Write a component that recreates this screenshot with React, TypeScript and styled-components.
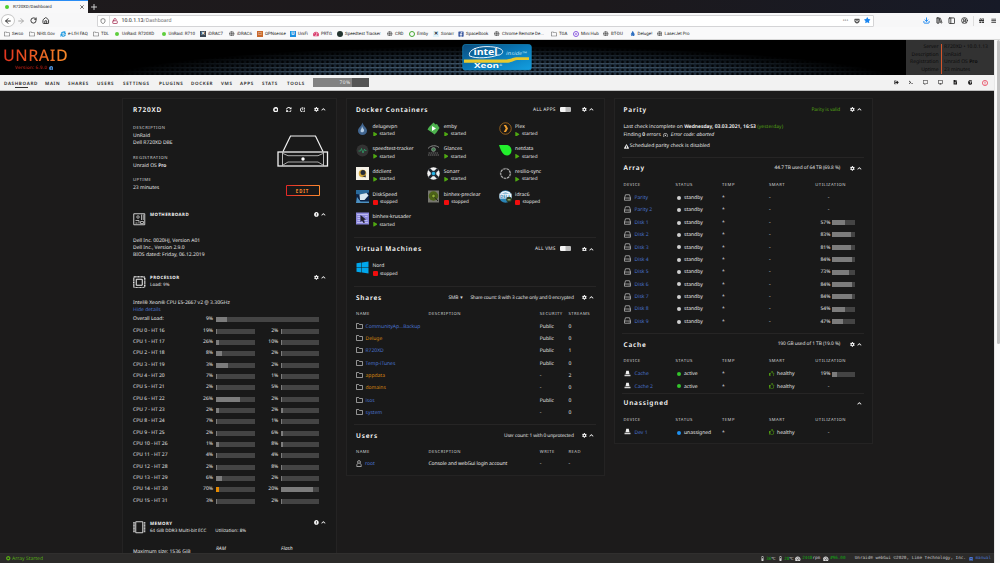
import React from 'react';
import styled, { createGlobalStyle } from 'styled-components';
import {
  FaCog, FaChevronUp, FaSyncAlt, FaPowerOff, FaInfoCircle, FaStopCircle, FaRegThumbsUp, FaExclamationTriangle,
  FaRegTimesCircle, FaSignOutAlt, FaTerminal, FaDesktop, FaQuestionCircle, FaGlobe, FaRegFolder, FaStar, FaBars, FaGift,
  FaFacebookSquare, FaBook, FaThermometerHalf, FaTachometerAlt, FaRegCommentAlt, FaFileAlt, FaTint, FaGetPocket,
  FaInternetExplorer, FaPlay,
} from 'react-icons/fa';
import { ArrowLeft, ArrowRight, RotateCw, House, Download, LibraryBig, PanelLeft, CircleUserRound, Shield, LockOpen } from 'lucide-react';

const Global = createGlobalStyle`
  * { box-sizing: border-box; }
  html, body { margin: 0; background: #1c1b1b; overflow: hidden; }
  body { font-family: "Noto Sans", sans-serif; font-size: 5px; line-height: 1; color: #e8e8e8; text-rendering: geometricPrecision; }
  svg { display: block; flex: none; }
`;

const Screen = styled.div`width: 1000px; height: 563px; display: flex; flex-direction: column; overflow: hidden; white-space: nowrap;`;

/* ---------- browser chrome ---------- */
const TabStrip = styled.div`height: 13px; flex: none; display: flex; background: linear-gradient(90deg, #1e1a1c, #1c191c 60%, #171a27);`;
const Tab = styled.div`
  width: 88px; height: 13px; padding: 0 4px 0 5px; display: flex; align-items: center; gap: 3px;
  background: #f8f8f9; border-top: 1px solid #2a8df5; color: #222; font: 4.4px Roboto, sans-serif;
`;
const TabTitle = styled.span`flex: 1; padding-left: 1px;`;
const Dot = styled.i<{ $c: string; $s?: number }>`
  width: ${p => p.$s ?? 4}px; height: ${p => p.$s ?? 4}px; border-radius: 50%; background: ${p => p.$c}; flex: none;
`;
const NewTab = styled.div`display: flex; align-items: center; padding-left: 3px;`;
const NavBar = styled.div`height: 14px; flex: none; display: flex; align-items: center; background: #f7f7f8; color: #333; padding-top: 1px;`;
const NavIcons = styled.div`width: 97px; display: flex; align-items: center; padding-left: 1px;`;
const BackBtn = styled.div`width: 14px; height: 13px; border: 1px solid #c8c8c8; border-radius: 50%; background: #fff; display: grid; place-items: center;`;
const Slot = styled.div<{ $w: number; $c?: string }>`width: ${p => p.$w}px; display: flex; justify-content: center; color: ${p => p.$c ?? 'inherit'};`;
const UrlBar = styled.div`
  width: 777px; height: 12px; background: #fff; border: 1px solid #d4d4d6; border-radius: 1px; display: flex; align-items: center;
  padding: 0 0 0 2px; font: 5.3px Roboto, sans-serif; color: #777;
  b { font-weight: 400; color: #111; }
`;
const UrlText = styled.span`flex: 1; padding: 1px 0 0 3.500px;`;
const UrlSep = styled.i`width: 1px; height: 10px; background: #ddd; margin: 0 2px 0 3px;`;
const Bookmarks = styled.div`height: 13px; flex: none; display: flex; background: #f9f9fa; padding-left: 4px; color: #222; font: 4.45px Roboto, sans-serif; border-bottom: 1px solid #d8d8d8;`;
const Bookmark = styled.div<{ $w: number }>`width: ${p => p.$w}px; display: flex; align-items: center; gap: 2px; padding-top: 1px;`;
const BmText = styled.span`padding-top: 1.4px;`;
const BmIcon = styled.span<{ $c?: string }>`width: 6px; display: flex; justify-content: center; color: ${p => p.$c ?? '#666'}; flex: none;`;
const Square = styled.span<{ $bg: string; $c?: string }>`
  width: 6px; height: 6px; background: ${p => p.$bg}; color: ${p => p.$c ?? '#fff'}; font-size: 5px; font-weight: 700; display: grid; place-items: center;
`;
const Ring = styled.span<{ $c: string }>`width: 6px; height: 6px; border-radius: 50%; border: 1px solid ${p => p.$c}; display: grid; place-items: center;`;

/* ---------- page frame ---------- */
const Viewport = styled.div`flex: 1; min-height: 0; display: flex;`;
const Page = styled.div`width: 994px; display: flex; flex-direction: column; background: #1c1b1b;`;
const ScrollTrack = styled.div`width: 6px; background: #fafafa; border-left: 1px solid #e8e8e8; padding: 0 1px;`;
const ScrollThumb = styled.div`height: 304px; width: 3px; margin-left: 1px; border-radius: 2px; background: #c2c2c2;`;

const Banner = styled.div`height: 35px; flex: none; background: #000; position: relative; display: flex; overflow: hidden;`;
const MeshArt = styled.div`position: absolute; inset: 0;`;
const Brand = styled.div`position: relative; width: 462px; padding-left: 3px;`;
const Logo = styled.div`
  width: 66px; height: 15px; margin-top: 7.5px; font: 16px/15px "Noto Sans", sans-serif; font-weight: 500; letter-spacing: .5px;
  background: linear-gradient(90deg, #e2331f, #f58a28); -webkit-background-clip: text; color: transparent;
`;
const Version = styled.div`
  margin: 3.2px 0 0 12px; display: flex; align-items: center; gap: 1.5px; color: #d3281f; font-size: 4.6px; letter-spacing: .22px;
  svg { color: #4b8fd9; }
`;
const BadgeArt = styled.div`position: relative; margin-top: 4px; flex: 1;`;
const ServerInfo = styled.div`
  position: relative; width: 88px; height: 35px; background: #323232; color: #0c0c0c; display: grid; grid-template-columns: 32.5px 1.5px 1fr; column-gap: 2px;
  padding-top: 3.500px; font-size: 5px; line-height: 7.5px;
`;
const InfoCol = styled.div<{ $right?: boolean }>`text-align: ${p => (p.$right ? 'right' : 'left')}; padding-top: .500px;`;
const InfoBar = styled.i`width: 1.5px; height: 30px; background: #d4552b;`;

const Menu = styled.nav`
  height: 16px; flex: none; background: #f2f2f2; border-bottom: 1px solid #bdbdbd; display: flex; align-items: center; padding-left: 4px;
  color: #1c1b1b; font-weight: 600; font-size: 4.55px; letter-spacing: .66px;
`;
const MenuItem = styled.span<{ $w: number; $active?: boolean }>`
  width: ${p => p.$w}px; height: 12px; line-height: 12px; margin-top: 2px;
  background: ${p => (p.$active ? 'linear-gradient(#333,#333) 11px 9px / 13px 1px no-repeat' : 'none')};
`;
const Gauge = styled.div`
  width: 56px; height: 9px; background: linear-gradient(90deg, #828282 70%, #545454 70%); color: #eee; font-size: 4.9px; font-weight: 400; line-height: 10.5px;
  padding-left: 26.5px; letter-spacing: .4px;
`;
const MenuIcons = styled.div`margin: 1.5px 0 0 520px; display: flex;`;

const Columns = styled.main`flex: 1; min-height: 0; display: flex; align-items: flex-start; padding: 7px 0 0 122px; gap: 9px; overflow: hidden;`;
const Panel = styled.section<{ $w: number; $h: number; $pl: number }>`
  width: ${p => p.$w}px; height: ${p => p.$h}px; background: #191919; border: 1px solid #242323; padding: 4px 8px 0 ${p => p.$pl - 1}px; flex: none;
`;

/* ---------- shared parts ---------- */
const Row = styled.div<{ $h: number; $mt?: number }>`height: ${p => p.$h}px; margin-top: ${p => p.$mt ?? 0}px; display: flex; align-items: center;`;
const Grow = styled.span`flex: 1;`;
const Title = styled.h2`margin: 0; flex: 1; font-size: 6.5px; font-weight: 600; letter-spacing: .8px; color: #fff;`;
const Note = styled.span<{ $c?: string; $mr?: number; $ls?: number }>`
  font-size: 4.8px; color: ${p => p.$c ?? '#e0e0e0'}; margin-right: ${p => p.$mr ?? 9.500}px; letter-spacing: ${p => p.$ls ?? -.05}px;
`;
const Controls = styled.span<{ $r: number }>`display: flex; align-items: center; gap: 2.2px; color: #f6f6f6; margin: -1px ${p => p.$r}px 0 0;`;
const Rule = styled.hr`border: 0; height: 1px; margin: 0 0 0 -2px; background: #262525;`;
const Cap = styled.div<{ $h?: number }>`font-size: 4.2px; letter-spacing: .48px; color: #d2d2d2; height: ${p => p.$h ?? 7}px; line-height: ${p => p.$h ?? 7}px;`;
const Line = styled.div<{ $h?: number; $c?: string }>`
  height: ${p => p.$h ?? 7.33}px; padding-top: 1.5px; line-height: 1; color: ${p => p.$c ?? '#e8e8e8'}; display: flex; align-items: center;
  b { font-weight: 600; color: #fff; }
`;
const Toggle = styled.span`width: 11px; height: 5px; border-radius: 1px; background: linear-gradient(90deg, #f4f4f4 48%, #bbb 52%); margin: -1.5px 11.5px 0 0;`;
const Meter = styled.span<{ $w: number }>`width: ${p => p.$w}px; height: 5px; background: #444; display: flex; flex: none;`;
const MeterFill = styled.i<{ $c?: string }>`height: 100%; background: ${p => p.$c ?? '#7c7c7c'};`;

const Bar = ({ w, v, c }: { w: number; v: number; c?: string }) => (
  <Meter $w={w}><MeterFill $c={c} style={{ width: `${v}%` }} /></Meter>
);
const Ctl = ({ icon = 'gear', r = 2.5 }: { icon?: 'gear' | 'info' | 'none'; r?: number }) => (
  <Controls $r={r}>
    {icon === 'gear' && <FaCog size={4.8} />}
    {icon === 'info' && <FaInfoCircle size={4.8} />}
    <FaChevronUp size={4.8} />
  </Controls>
);

/* ---------- system panel ---------- */
const SysIcons = styled.span`display: flex; gap: 7.8px; margin: -1px 8.500px 0 0; color: #f6f6f6;`;
const SysTop = styled.div`display: flex; justify-content: space-between; padding-top: 7px; height: 94px;`;
const SysText = styled.div`display: flex; flex-direction: column;`;
const Gap = styled.div<{ $h: number }>`height: ${p => p.$h}px; flex: none;`;
const SysArt = styled.div`width: 52px; margin-right: -.500px; padding-top: 10px; display: flex; flex-direction: column; align-items: center; gap: 17.5px;`;
const EditBtn = styled.button`
  width: 34px; height: 11px; padding: 1px 0 0; border: 1px solid transparent; border-radius: 1px; font: 700 4.3px "Noto Sans", sans-serif; letter-spacing: .9px; color: #ff8c2f;
  background: linear-gradient(#191919, #191919) padding-box, linear-gradient(90deg, #e22828, #ff8c2f) border-box;
`;
const HwHead = styled.div`display: flex; align-items: flex-start; gap: 4.5px; height: 14px;`;
const HwText = styled.div`flex: 1; height: 14px; font-size: 4.5px; line-height: 7.3px; letter-spacing: .05px; margin-top: -.700px;`;
const HwName = styled.div`font-weight: 700; font-size: 4.4px; letter-spacing: .45px; color: #f2f2f2;`;
const HwSub = styled.div`display: flex; gap: 9px;`;
const CpuRow = styled.div`height: 11.33px; padding-top: 1.4px; display: grid; grid-template-columns: 80px 2.5px 39px 23.7px 2.5px 38.3px; align-items: center;`;
const Pct = styled.span`text-align: right;`;
const CpuLabel = styled.span`display: flex; justify-content: space-between;`;
const Wide = styled.span`grid-column: span 4;`;
const MemRow = styled.div`display: grid; grid-template-columns: 83px 65px 1fr; height: 10px; line-height: 10px; i { margin-top: -2.500px; } span { padding-top: .500px; }`;

const cpus: [number, number, number, number][] = [
  [19, 5, 2, 2], [26, 8, 10, 2], [8, 17, 2, 1], [3, 33, 2, 4], [7, 4, 1, 1], [2, 1, 5, 3], [26, 63, 2, 1], [2, 10, 2, 7],
  [7, 4, 1, 1], [2, 1, 6, 5], [1, 8, 8, 5], [4, 5, 4, 3], [2, 1, 8, 1], [6, 17, 2, 1], [70, 8, 20, 84], [3, 2, 2, 3],
];

const ServerArt = () => (
  <svg width="52" height="32" viewBox="0 0 52 32" fill="none" stroke="#f2f2f2">
    <path d="M6 16.500 13.500 1h25L46 16.500" strokeWidth="1.200" />
    <rect x="1" y="17" width="49.500" height="14" strokeWidth="1.300" />
    <path d="M5.500 17v14M46.500 17v14" strokeWidth=".9" stroke="#ccc" />
    <path d="M6 18.500l5 2.200h30l5-2.200M6 30l5-3h30l5 3" strokeWidth="1" stroke="#aaa" />
    <circle cx="26" cy="24" r="1.700" fill="#fff" stroke="none" />
  </svg>
);
const BoardArt = () => (
  <svg width="12.500" height="12.500" viewBox="0 0 25 25" fill="none" stroke="#bbb" strokeWidth="1.800">
    <path d="M1.500 1.500h22v22h-22z" stroke="#ddd" /><circle cx="10" cy="8" r="2.500" /><path d="M17 3v11M20.500 3v11M5 15h7v6M5 20h4M15 17h6v4h-6z" />
  </svg>
);
const ChipArt = () => (
  <svg width="12.500" height="12.500" viewBox="0 0 25 25" fill="none" stroke="#f2f2f2">
    <path d="M6.500 6.500h12v12h-12z" strokeWidth="2" /><rect x="1.500" y="1.500" width="22" height="22" rx="3" strokeWidth="3" strokeDasharray="2 .8" stroke="#ddd" />
  </svg>
);
const MemArt = () => (
  <svg width="12.500" height="12.500" viewBox="0 0 25 25" fill="none" stroke="#e6e6e6">
    <path d="M5.500 1.500h14v22h-14z" strokeWidth="1.800" /><path d="M2 2v21M23 2v21" strokeWidth="3.400" strokeDasharray="2.400 .6" stroke="#bbb" />
  </svg>
);

const SystemPanel = () => (
  <Panel $w={215} $h={470} $pl={11}>
    <Row $h={16} $mt={-1}>
      <Title>R720XD</Title>
      <SysIcons><FaStopCircle size={5.6} /><FaSyncAlt size={5.6} /><FaPowerOff size={5.6} /></SysIcons>
      <Ctl />
    </Row>
    <SysTop>
      <SysText>
        <Cap $h={7}>DESCRIPTION</Cap><Line $h={7.3}>UnRaid</Line><Line $h={7.3}>Dell R720XD DBE</Line>
        <Gap $h={8} />
        <Cap>REGISTRATION</Cap><Line>Unraid OS&nbsp;<b>Pro</b></Line>
        <Gap $h={8.3} />
        <Cap>UPTIME</Cap><Line>23 minutes</Line>
      </SysText>
      <SysArt><ServerArt /><EditBtn>EDIT</EditBtn></SysArt>
    </SysTop>
    <Gap $h={1} />
    <HwHead><BoardArt /><HwText><HwName>MOTHERBOARD</HwName></HwText><Ctl icon="info" /></HwHead>
    <Gap $h={9.6} />
    <Line>Dell Inc. 0020HJ, Version A01</Line><Line>Dell Inc., Version 2.9.0</Line><Line>BIOS dated: Friday, 06.12.2019</Line>
    <Gap $h={17.2} />
    <HwHead><ChipArt /><HwText><HwName>PROCESSOR</HwName>Load: 9%</HwText><Ctl /></HwHead>
    <Gap $h={9.1} />
    <Line>Intel® Xeon® CPU E5-2667 v2 @ 3.30GHz</Line><Line $c="#4a74d0">Hide details</Line>
    <CpuRow>
      <CpuLabel>Overall Load:<span>9%</span></CpuLabel><span /><Wide><Bar w={103.5} v={11} /></Wide>
    </CpuRow>
    {cpus.map(([a, fa, b, fb], i) => (
      <CpuRow key={i}>
        <CpuLabel>{`CPU ${i} - HT ${i + 16}`}<span>{a}%</span></CpuLabel><span />
        <Bar w={39} v={fa} c={a === 70 ? '#e68a00' : undefined} />
        <Pct>{b}%</Pct><span /><Bar w={38.3} v={fb} />
      </CpuRow>
    ))}
    <Gap $h={15.2} />
    <HwHead>
      <MemArt />
      <HwText><HwName>MEMORY</HwName><HwSub><span>64 GiB DDR3 Multi-bit ECC</span><span>Utilization: 8%</span></HwSub></HwText>
      <Ctl icon="info" />
    </HwHead>
    <Gap $h={11} />
    <MemRow><span>Maximum size: 1536 GiB</span><i>RAM</i><i>Flash</i></MemRow>
  </Panel>
);

/* ---------- docker / shares panel ---------- */
const AppGrid = styled.div`display: grid; grid-template-columns: repeat(3, 71.3px); grid-auto-rows: 22.67px;`;
const AppCell = styled.div`display: flex; align-items: center; gap: 3.5px; height: 22.67px;`;
const AppText = styled.div`line-height: 7.4px; padding-top: 5.6px;`;
const AppState = styled.div`display: flex; align-items: center; gap: 2.4px; font-size: 4.6px; > svg, > i { margin-top: -1.6px; }`;
const StopMark = styled.i`width: 5px; height: 5px; border-radius: 1px; background: #f10d0d;`;
const AppArt = styled.span`width: 13px; height: 13px;`;
const ShareRow = styled.div<{ $h?: number }>`
  height: ${p => p.$h ?? 12.38}px; padding-top: ${p => (p.$h ? 0 : 1.4)}px; display: grid; grid-template-columns: 72.5px 111.3px 28.6px 1fr; align-items: center;
`;
const Named = styled.span<{ $c?: string; $gap?: number }>`
  display: flex; align-items: center; gap: ${p => p.$gap ?? 2.5}px; color: ${p => p.$c ?? '#4a74d0'}; svg { margin-top: -3px; }
`;
const LoginNote = styled.span`letter-spacing: -.08px;`;

const art: Record<string, React.ReactNode> = {
  delugevpn: <><path d="M13 1C15 8 22 12 22 17.500a9 8.500 0 0 1-18 0C4 12 11 8 13 1z" fill="#41658f" /><path d="M12 8c1 5 5 6 4 10s-7 3-7 0 3-5 3-10z" fill="#b4cbe2" /></>,
  emby: <><path d="M13 1l4 4 3-1 5 8-6 9-4 4-5-4-9-6 3-5 4-4z" fill="#4db24e" /><path d="M10 8l8 5-8 5z" fill="#fff" /></>,
  Plex: <><circle cx="13" cy="13" r="11.500" fill="#1d1a17" stroke="#b97721" strokeWidth="1.500" /><path d="M9.500 6h4.500l4 7-4 7H9.500l4-7z" fill="#f0a030" /></>,
  'speedtest-tracker': <><circle cx="13" cy="13" r="12" fill="#333" /><path d="M5 14h4l2-5 3 9 3-8 1 3h3" stroke="#2f9a66" strokeWidth="1.600" fill="none" /></>,
  Glances: <><path d="M2 9c6-7 16-7 22-2" stroke="#888" strokeWidth="2" fill="none" /><circle cx="13" cy="11" r="4" fill="#437a50" stroke="#aaa" /><path d="M3 18h20M2 22h22" stroke="#777" strokeWidth="1.800" strokeDasharray="3 1" /></>,
  netdata: <path d="M0 2h15c6 0 10 5 10 11s-4 10-9 10C8 23 4 14 0 2z" fill="#22ee2c" />,
  ddclient: <><path d="M0 0h26v26H0z" fill="#f4f1e6" /><circle cx="13" cy="13" r="7.500" fill="#d2a83c" /><circle cx="14" cy="11" r="5" fill="#222a38" /><path d="M12 18l7 3 1-4" fill="#333" /></>,
  Sonarr: <><circle cx="13" cy="13" r="12.500" fill="#f2f2f2" /><path d="M4 4l6 6M22 4l-6 6M4 22l6-6M22 22l-6-6" stroke="#22262d" strokeWidth="5" /><circle cx="13" cy="13" r="5.500" fill="#24303d" /><circle cx="13" cy="13" r="3.500" fill="#28b6e8" /></>,
  'resilio-sync': <><circle cx="13" cy="13" r="12" fill="#2d2d2d" /><circle cx="13" cy="13" r="9.500" fill="#191919" stroke="#b8b8b8" strokeWidth="2.200" strokeDasharray="5 1.500" /></>,
  DiskSpeed: <><path d="M0 0h26v26H0z" fill="#0b2347" /><path d="M0 0h26v5L8 9 0 8z" fill="#2a6a9c" /><path d="M7 9l14-3 4 5-8 9H8z" fill="#d8e8f2" /><path d="M2 14l7 9h17v3H0z" fill="#4d90c0" /></>,
  'binhex-preclear': <><path d="M2 1h22v24H2z" fill="#77776f" /><circle cx="13" cy="12" r="9.500" fill="#4c6318" /><circle cx="13" cy="12" r="3.500" fill="#8fae38" stroke="#29350c" /><path d="M16 15l6 7" stroke="#222" strokeWidth="2" /></>,
  idrac6: <><circle cx="13" cy="13" r="12.500" fill="#2b84b5" /><path d="M1 7h24v10H1z" fill="#f4f9fc" /><path d="M4 7c4-5 14-5 18 0" stroke="#f4f9fc" strokeWidth="3" fill="none" /><text x="2" y="16" fontSize="9" fontWeight="700" fill="#2b84b5">DELL</text><circle cx="20" cy="19" r="5.500" fill="#26381f" /><path d="M17 18h6v3h-6z" fill="#8ea26a" /></>,
  'binhex-krusader': <><path d="M0 1h26v24H0z" fill="#8c88dc" /><path d="M2 5h22M3 9h5M3 13h5M3 17h5M18 9h5M18 17h5M2 21h22" stroke="#cbc9f5" strokeWidth="1.500" /><path d="M9 6l11 9-5 1 3 5-3 1-3-5-3 3z" fill="#21202c" /></>,
  Nord: <path d="M1 4.500l10-1.500v9.500H1zM12 2.900L25 1v11.500H12zM1 13.500h10V23L1 21.500zM12 13.500h13V25l-13-1.900z" fill="#00a7ec" />,
};
const AppItem = ({ name, stopped }: { name: string; stopped?: boolean }) => (
  <AppCell>
    <AppArt><svg width="13" height="13" viewBox="0 0 26 26">{art[name]}</svg></AppArt>
    <AppText>
      {name}
      <AppState>{stopped ? <><StopMark />stopped</> : <><FaPlay size={4.6} color="#4fa812" />started</>}</AppState>
    </AppText>
  </AppCell>
);
const FolderArt = () => (
  <svg width="7" height="6" viewBox="0 0 14 12" fill="none" stroke="#c8c8c8" strokeWidth="1.400"><path d="M1 1h4.500l1.500 2h6v8H1z" /></svg>
);
const apps: [string, boolean?][] = [
  ['delugevpn'], ['emby'], ['Plex'], ['speedtest-tracker'], ['Glances'], ['netdata'], ['ddclient'], ['Sonarr'], ['resilio-sync'],
  ['DiskSpeed', true], ['binhex-preclear', true], ['idrac6', true], ['binhex-krusader'],
];
const shares: [string, string, string, boolean?][] = [
  ['CommunityAp...Backup', 'Public', '0'], ['Deluge', 'Public', '0', true], ['R720XD', 'Public', '1'], ['Temp-iTunes', 'Public', '0'],
  ['appdata', '-', '2', true], ['domains', '-', '0', true], ['isos', 'Public', '0'], ['system', '-', '0'],
];

const AppsPanel = () => (
  <Panel $w={259} $h={378} $pl={10}>
    <Row $h={14}><Title>Docker Containers</Title><Note $mr={4} $ls={.22}>ALL APPS</Note><Toggle /><Ctl r={2} /></Row>
    <AppGrid>{apps.map(([n, s]) => <AppItem key={n} name={n} stopped={s} />)}</AppGrid>
    <Gap $h={7.2} /><Rule />
    <Row $h={14} $mt={4}><Title>Virtual Machines</Title><Note $mr={4} $ls={.22}>ALL VMS</Note><Toggle /><Ctl r={2} /></Row>
    <AppItem name="Nord" stopped />
    <Gap $h={7} /><Rule />
    <Row $h={14} $mt={4}>
      <Title>Shares</Title><Note $mr={8} $ls={-.2}>SMB &nbsp;▾</Note><Note $mr={8.5} $ls={-.14}>Share count: 8 with 3 cache only and 0 encrypted</Note><Ctl r={2} />
    </Row>
    <Gap $h={5} />
    <ShareRow $h={8}><Cap>NAME</Cap><Cap>DESCRIPTION</Cap><Cap>SECURITY</Cap><Cap>STREAMS</Cap></ShareRow>
    <Gap $h={2} />
    {shares.map(([n, sec, st, o]) => (
      <ShareRow key={n}><Named $c={o ? '#d98810' : undefined}><FolderArt />{n}</Named><span /><span>{sec}</span><span>{st}</span></ShareRow>
    ))}
    <Gap $h={5.2} /><Rule />
    <Row $h={14} $mt={3.8}><Title>Users</Title><Note $mr={8.5} $ls={-.13}>User count: 1 with 0 unprotected</Note><Ctl r={2} /></Row>
    <Gap $h={5} />
    <ShareRow $h={8}><Cap>NAME</Cap><Cap>DESCRIPTION</Cap><Cap>WRITE</Cap><Cap>READ</Cap></ShareRow>
    <Gap $h={1.7} />
    <ShareRow>
      <Named $gap={3}>
        <svg width="6" height="7" viewBox="0 0 12 14" fill="none" stroke="#c8c8c8" strokeWidth="1.500"><circle cx="6" cy="4" r="2.800" /><path d="M3.500 6.500C1.500 8 1.500 11 1.500 13h9c0-2 0-5-2-6.500" /></svg>
        root
      </Named>
      <LoginNote>Console and webGui login account</LoginNote><span>-</span><span>-</span>
    </ShareRow>
  </Panel>
);

/* ---------- disks panel ---------- */
const DiskRow = styled.div<{ $h?: number }>`
  height: ${p => p.$h ?? 12.38}px; padding-top: ${p => (p.$h ? 0 : 1.4)}px; display: grid; grid-template-columns: 52px 46.500px 47px 46.300px 1fr; align-items: center;
`;
const Util = styled.span`display: flex; align-items: center; ${Meter} { margin-top: -1.400px; }`;
const UtilPct = styled.span`width: 15px; text-align: right; margin-right: 2.200px;`;
const UtilNone = styled.span`padding-left: 12.500px;`;
const State = styled.span`display: flex; align-items: center; gap: 3px; padding-left: 1.500px; i { margin-top: -1.400px; }`;
const Health = styled.span`display: flex; align-items: center; gap: 2.500px; svg { color: #4f9a12; margin-top: -2.500px; }`;

const HddArt = () => (
  <svg width="7" height="7" viewBox="0 0 14 14" fill="none" stroke="#c8c8c8" strokeWidth="1.400"><path d="M1 8L3 1.500h8L13 8v4.500H1zM1 8h12M9.500 10.300h1.500" /></svg>
);
const SsdArt = () => (
  <svg width="7" height="7" viewBox="0 0 14 14"><path d="M3 8.500L4.500 1.500h5L11 8.500z" fill="#eee" /><path d="M1 9.500h12v3H1z" fill="#d4d4d4" /></svg>
);
type Disk = { n: string; s: string; c: string; u?: number; ok?: boolean };
const standby = (n: string, u?: number): Disk => ({ n, s: 'standby', c: '#d0d0d0', u });
const arrayDisks = [
  standby('Parity'), standby('Parity 2'), standby('Disk 1', 57), standby('Disk 2', 83), standby('Disk 3', 81), standby('Disk 4', 84),
  standby('Disk 5', 73), standby('Disk 6', 84), standby('Disk 7', 84), standby('Disk 8', 54), standby('Disk 9', 47),
];
const cacheDisks: Disk[] = [{ n: 'Cache', s: 'active', c: '#33c52b', u: 19, ok: true }, { n: 'Cache 2', s: 'active', c: '#33c52b', ok: true }];
const otherDisks: Disk[] = [{ n: 'Dev 1', s: 'unassigned', c: '#1e90f0', ok: true }];

const DiskTable = ({ disks }: { disks: Disk[] }) => (
  <>
    <Gap $h={5.7} />
    <DiskRow $h={8}><Cap>DEVICE</Cap><Cap>STATUS</Cap><Cap>TEMP</Cap><Cap>SMART</Cap><Cap>UTILIZATION</Cap></DiskRow>
    <Gap $h={2.3} />
    {disks.map(d => (
      <DiskRow key={d.n}>
        <Named $gap={4}>{d.ok ? <SsdArt /> : <HddArt />}{d.n}</Named>
        <State><Dot $c={d.c} $s={4} />{d.s}</State>
        <span>*</span>
        {d.ok ? <Health><FaRegThumbsUp size={5.6} />healthy</Health> : <span>-</span>}
        {d.u ? <Util><UtilPct>{d.u}%</UtilPct><Bar w={22.7} v={d.u} /></Util> : <UtilNone>-</UtilNone>}
      </DiskRow>
    ))}
  </>
);

const DisksPanel = () => (
  <Panel $w={259} $h={346} $pl={9.500}>
    <Row $h={14}><Title>Parity</Title><Note $c="#55a814">Parity is valid</Note><Ctl /></Row>
    <Gap $h={6} />
    <Line $h={7.5}>Last check incomplete on&nbsp;<b>Wednesday, 03.03.2021, 16:53</b>&nbsp;<Note $c="#55a814" $ls={.12}>(yesterday)</Note></Line>
    <Line $h={7.5}>Finding&nbsp;<b>0</b>&nbsp;errors&nbsp;&nbsp;<FaRegTimesCircle size={4.800} />&nbsp;&nbsp;<i>Error code: aborted</i></Line>
    <Gap $h={4} />
    <Line $h={8}><FaExclamationTriangle size={5} />&nbsp;Scheduled parity check is disabled</Line>
    <Gap $h={7} /><Rule />
    <Row $h={14} $mt={3.7}><Title>Array</Title><Note>44.7 TB used of 64 TB (69.8 %)</Note><Ctl /></Row>
    <DiskTable disks={arrayDisks} />
    <Gap $h={5.3} /><Rule />
    <Row $h={14} $mt={3.8}><Title>Cache</Title><Note>190 GB used of 1 TB (19.0 %)</Note><Ctl /></Row>
    <DiskTable disks={cacheDisks} />
    <Rule />
    <Row $h={14} $mt={3}><Title>Unassigned</Title><Ctl icon="none" /></Row>
    <DiskTable disks={otherDisks} />
  </Panel>
);

/* ---------- footer ---------- */
const Footer = styled.footer`
  height: 10px; flex: none; background: #2b2a29; border-top: 1px solid #302f2e; display: flex; align-items: center; padding: 0 3px 0 6px; gap: 2px;
  color: #c8c8c8; font: 4.300px "DejaVu Sans Mono", monospace;
`;
const ArrayState = styled.span`display: flex; align-items: center; gap: 1.500px; color: #55a814; flex: 1; font: 5px "Noto Sans", sans-serif;`;
const Stat = styled.span<{ $w: number }>`
  width: ${p => p.$w}px; display: flex; align-items: center; gap: 1.500px; letter-spacing: -.05px; svg { color: #ddd; }
  em { font-style: normal; color: #12a512; }
`;
const Manual = styled.span`display: flex; align-items: center; gap: 2px; color: #4a74d0; margin-left: 1.500px;`;

/* ---------- banner art ---------- */
const Mesh = () => (
  <svg width="994" height="35" viewBox="0 0 994 35">
    <defs>
      <pattern id="m" width="5" height="4" patternUnits="userSpaceOnUse">
        <rect width="5" height="4" fill="#26384a" />
        <path d="M.6 2L2.500.6l1.900 1.400-1.900 1.400z" fill="#04080c" />
        <path d="M0 4L2.500 3.500 5 4" fill="none" stroke="#5f7d96" strokeWidth=".8" />
      </pattern>
      <radialGradient id="g" gradientUnits="userSpaceOnUse" cx="0" cy="0" r="1" gradientTransform="translate(500 46) scale(410 40)">
        <stop offset="0" stopColor="#fff" /><stop offset=".55" stopColor="#ddd" /><stop offset="1" stopColor="#000" />
      </radialGradient>
      <mask id="k"><rect width="994" height="35" fill="url(#g)" /></mask>
    </defs>
    <rect width="994" height="35" fill="url(#m)" mask="url(#k)" />
  </svg>
);
const XeonBadge = () => (
  <svg width="70" height="27" viewBox="0 0 70 27" fontFamily="Open Sans, sans-serif">
    <defs>
      <linearGradient id="b" x1="0" y1="0" x2="1" y2="1"><stop offset="0" stopColor="#0b4c7d" /><stop offset=".5" stopColor="#0a79b8" /><stop offset="1" stopColor="#139fe0" /></linearGradient>
    </defs>
    <rect x=".7" y=".5" width="68.600" height="25.500" rx="2.500" fill="url(#b)" stroke="#1688bd" strokeWidth=".7" />
    <path d="M2 15.500h41c6 0 7-2.300 13-2.300h11v2.700H57c-6 0-7 2.900-13 2.900H2z" fill="#e8c92d" />
    <path d="M8 12.500C5 8 12 2.500 25 2.600c10 0 17 2.500 15.500 6-1 2-3 2.500-4.500 2.500M8 12c6 3 20 2 28-1" stroke="#eaf6fc" strokeWidth="1" fill="none" />
    <text x="11.500" y="10.700" fontSize="9" fontWeight="700" fill="#fff" textLength="24" lengthAdjust="spacingAndGlyphs">intel</text>
    <text x="44" y="11.300" fontSize="5" fontStyle="italic" fill="#b5e2f6" textLength="21" lengthAdjust="spacingAndGlyphs">inside™</text>
    <text x="12" y="24.200" fontSize="7" fontWeight="700" fill="#fff" textLength="25" lengthAdjust="spacingAndGlyphs">Xeon</text>
    <text x="37.500" y="21.500" fontSize="3" fill="#fff">®</text>
  </svg>
);

const folder = <FaRegFolder size={6} />;
const globe = <FaGlobe size={5.500} />;
const bookmarks: [React.ReactNode, string, number, string?][] = [
  [folder, 'Serco', 25], [folder, 'NHS.Gov', 31], [<FaInternetExplorer size={6} />, 'e-LfH FAQ', 33, '#1f9ae0'], [folder, 'TDL', 21],
  [<Dot $c="#5fce3c" />, 'UnRaid: R720XD', 46.500], [<Dot $c="#5fce3c" />, 'UnRaid: R710', 39.500], [<Square $bg="#3a4654">✕</Square>, 'iDRAC7', 29],
  [globe, 'iDRAC6', 28], [<Square $bg="#c9682c">□</Square>, 'OPNsense', 33], [<Square $bg="#1a8fe0">U</Square>, 'UniFi', 23],
  [<FaTachometerAlt size={6} />, 'PRTG', 24, '#d9386a'], [<Dot $c="#22332f" $s={6} />, 'Speedtest Tracker', 50], [globe, 'CRD', 22],
  [<Ring $c="#45a82f" />, 'Emby', 24], [<Square $bg="#dff3fb" $c="#10202e">✕</Square>, 'Sonarr', 25], [<FaFacebookSquare size={6} />, 'SpaceBook', 36, '#3a58a0'],
  [globe, 'Chrome Remote De...', 57], [folder, 'TGA', 22], [<Ring $c="#8a5ae0"><Dot $c="#a57ae8" $s={2} /></Ring>, 'Mini Hub', 30], [globe, 'BT-DU', 26.500],
  [<FaTint size={5.500} />, 'Deluge!', 27, '#2f6fc0'], [globe, 'LaserJet Pro', 40],
];
const menu: [string, number][] = [
  ['DASHBOARD', 41], ['MAIN', 23], ['SHARES', 29], ['USERS', 26], ['SETTINGS', 36], ['PLUGINS', 32], ['DOCKER', 30], ['VMS', 19], ['APPS', 22], ['STATS', 25], ['TOOLS', 26],
];

export default function App() {
  return (
    <Screen>
      <Global />
      <TabStrip>
        <Tab><Dot $c="#4fd02c" /><TabTitle>R720XD/Dashboard</TabTitle><svg width="4" height="4" viewBox="0 0 4 4" stroke="#333" strokeWidth=".7"><path d="M.3.3l3.400 3.400M3.700.3L.3 3.700" /></svg></Tab>
        <NewTab><svg width="6" height="6" viewBox="0 0 6 6" stroke="#ddd" strokeWidth=".9"><path d="M3 0v6M0 3h6" /></svg></NewTab>
      </TabStrip>
      <NavBar>
        <NavIcons>
          <BackBtn><ArrowLeft size={8} strokeWidth={3} /></BackBtn>
          <Slot $w={12} $c="#aaa"><ArrowRight size={8} strokeWidth={3} /></Slot><Slot $w={13}><RotateCw size={7} strokeWidth={3.200} /></Slot><Slot $w={12}><House size={7.500} strokeWidth={3} /></Slot>
        </NavIcons>
        <UrlBar>
          <Shield size={6} strokeWidth={2.800} color="#555" /><UrlSep /><LockOpen size={6} strokeWidth={3.200} color="#a8385a" />
          <UrlText><b>10.0.1.13</b>/Dashboard</UrlText>
          <Slot $w={11} $c="#444">•••</Slot><Slot $w={11} $c="#555"><FaGetPocket size={6} /></Slot><Slot $w={11} $c="#1a86f0"><FaStar size={6.500} /></Slot>
        </UrlBar>
        <Grow />
        <Slot $w={13} $c="#1a86f0"><Download size={7} strokeWidth={3.200} /></Slot><Slot $w={12}><LibraryBig size={7} strokeWidth={2.800} /></Slot><Slot $w={13}><PanelLeft size={7.500} strokeWidth={2.800} /></Slot>
        <Slot $w={12}><CircleUserRound size={7} strokeWidth={2.800} /></Slot><UrlSep /><Slot $w={11}><FaGift size={5.500} /></Slot><Slot $w={13}><FaBars size={5.500} /></Slot>
      </NavBar>
      <Bookmarks>
        {bookmarks.map(([ic, label, w, c]) => <Bookmark key={label} $w={w}><BmIcon $c={c}>{ic}</BmIcon><BmText>{label}</BmText></Bookmark>)}
      </Bookmarks>
      <Viewport>
        <Page>
          <Banner>
            <MeshArt><Mesh /></MeshArt>
            <Brand><Logo>UNRAID</Logo><Version>Version: 6.9.0 <FaInfoCircle size={4.500} /></Version></Brand>
            <BadgeArt><XeonBadge /></BadgeArt>
            <ServerInfo>
              <InfoCol $right>Server<br />Description<br />Registration<br />Uptime</InfoCol><InfoBar />
              <InfoCol>R720XD • 10.0.1.13<br />UnRaid<br />Unraid OS <b>Pro</b><br />23 minutes</InfoCol>
            </ServerInfo>
          </Banner>
          <Menu>
            {menu.map(([m, w], i) => <MenuItem key={m} $w={w} $active={i === 0}>{m}</MenuItem>)}
            <Gauge>70%</Gauge>
            <MenuIcons>
              <Slot $w={14.700}><FaSignOutAlt size={4.800} /></Slot><Slot $w={14.700}><FaTerminal size={4.800} /></Slot><Slot $w={14.700}><FaRegCommentAlt size={4.800} /></Slot>
              <Slot $w={14.700}><FaDesktop size={4.800} /></Slot><Slot $w={14.700}><FaFileAlt size={4.600} /></Slot><Slot $w={15}><FaQuestionCircle size={4.800} /></Slot>
              <Slot $w={15.500}>
                <svg width="6" height="6" viewBox="0 0 14 14" fill="none" stroke="#e8304a" strokeWidth="1.700"><circle cx="7" cy="7" r="6" /><path d="M7 3.500v4.500M7 9v1.800" /></svg>
              </Slot>
            </MenuIcons>
          </Menu>
          <Columns><SystemPanel /><AppsPanel /><DisksPanel /></Columns>
          <Footer>
            <ArrayState><FaStopCircle size={4.500} />Array Started</ArrayState>
            <Stat $w={16}><FaThermometerHalf size={5} /><span><em>36</em>℃</span></Stat>
            <Stat $w={15.500}><FaThermometerHalf size={5} /><span><em>28</em>℃</span></Stat>
            <Stat $w={26}><FaTachometerAlt size={5.500} /><span><em>2448</em>rpm</span></Stat>
            <Stat $w={29.500}><FaTachometerAlt size={5.500} /><em>₽96.00</em></Stat>
            <span>Unraid® webGui ©2020, Lime Technology, Inc.</span>
            <Manual><FaBook size={4} />manual</Manual>
          </Footer>
        </Page>
        <ScrollTrack><ScrollThumb /></ScrollTrack>
      </Viewport>
    </Screen>
  );
}
